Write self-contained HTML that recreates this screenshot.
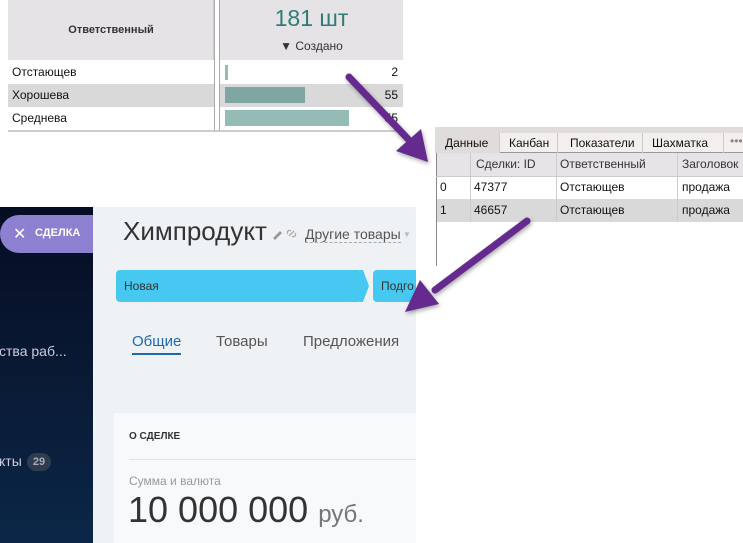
<!DOCTYPE html>
<html><head><meta charset="utf-8"><style>
*{margin:0;padding:0;box-sizing:border-box}
body{width:743px;height:543px;background:#fff;position:relative;overflow:hidden;font-family:"Segoe UI","Liberation Sans","DejaVu Sans",sans-serif}
.a{position:absolute}
.t{font-size:12px;color:#111;white-space:nowrap}
</style></head><body>
<div class="a" style="left:8px;top:0;width:206px;height:60px;background:#e5e3e5;border-right:1px solid #ccc"></div>
<div class="a t" style="left:8px;top:24px;width:206px;text-align:center;font-weight:bold;font-size:11px;color:#333">Ответственный</div>
<div class="a" style="left:214px;top:0;width:6px;height:132px;background:#fff;border-left:1px solid #aaa;border-right:1px solid #aaa"></div>
<div class="a" style="left:220px;top:0;width:183px;height:60px;background:#e5e3e5"></div>
<div class="a" style="left:220px;top:5px;width:183px;text-align:center;font-size:23px;color:#2e7d76">181 шт</div>
<div class="a t" style="left:220px;top:39px;width:183px;text-align:center;color:#333">▼ Создано</div>
<div class="a" style="left:8px;top:84px;width:206px;height:23px;background:#d9d9d9"></div>
<div class="a" style="left:220px;top:84px;width:183px;height:23px;background:#d9d9d9"></div>
<div class="a" style="left:8px;top:130px;width:395px;height:2px;background:#ccc"></div>
<div class="a t" style="left:12px;top:65px">Отстающев</div>
<div class="a t" style="left:12px;top:88px">Хорошева</div>
<div class="a t" style="left:12px;top:111px">Среднева</div>
<div class="a" style="left:225px;top:65px;width:3px;height:15px;background:#94bbb6"></div>
<div class="a" style="left:225px;top:87px;width:80px;height:16px;background:#7fa6a2"></div>
<div class="a" style="left:225px;top:110px;width:124px;height:16px;background:#94bbb6"></div>
<div class="a t" style="left:340px;top:65px;width:58px;text-align:right">2</div>
<div class="a t" style="left:340px;top:88px;width:58px;text-align:right">55</div>
<div class="a t" style="left:340px;top:111px;width:58px;text-align:right">55</div>

<div class="a" style="left:435px;top:127px;width:308px;height:6px;background:#e0dcdc"></div>
<div class="a" style="left:435px;top:133px;width:308px;height:20px;background:#f3efef;border-bottom:1px solid #999"></div>
<div class="a" style="left:435px;top:133px;width:64px;height:20px;background:#e0dcdc"></div>
<div class="a t" style="left:445px;top:136px">Данные</div>
<div class="a" style="left:499px;top:133px;width:1px;height:20px;background:#ccc"></div>
<div class="a t" style="left:509px;top:136px">Канбан</div>
<div class="a" style="left:557px;top:133px;width:1px;height:20px;background:#ccc"></div>
<div class="a t" style="left:570px;top:136px">Показатели</div>
<div class="a" style="left:642px;top:133px;width:1px;height:20px;background:#ccc"></div>
<div class="a t" style="left:652px;top:136px">Шахматка</div>
<div class="a" style="left:723px;top:133px;width:1px;height:20px;background:#ccc"></div>
<div class="a t" style="left:730px;top:134px;color:#888">•••</div>
<div class="a" style="left:436px;top:153px;width:307px;height:23px;background:#e6e4e6"></div>
<div class="a" style="left:436px;top:199px;width:307px;height:23px;background:#d9d9d9"></div>
<div class="a" style="left:436px;top:153px;width:1px;height:113px;background:#888"></div>
<div class="a" style="left:470px;top:153px;width:1px;height:69px;background:#ccc"></div>
<div class="a" style="left:556px;top:153px;width:1px;height:69px;background:#ccc"></div>
<div class="a" style="left:677px;top:153px;width:1px;height:69px;background:#ccc"></div>
<div class="a" style="left:436px;top:176px;width:307px;height:1px;background:#ccc"></div>
<div class="a t" style="left:476px;top:157px;color:#333">Сделки: ID</div>
<div class="a t" style="left:560px;top:157px;color:#333">Ответственный</div>
<div class="a t" style="left:682px;top:157px;color:#333">Заголовок</div>
<div class="a t" style="left:440px;top:180px">0</div>
<div class="a t" style="left:474px;top:180px">47377</div>
<div class="a t" style="left:560px;top:180px">Отстающев</div>
<div class="a t" style="left:682px;top:180px">продажа</div>
<div class="a t" style="left:440px;top:203px">1</div>
<div class="a t" style="left:474px;top:203px">46657</div>
<div class="a t" style="left:560px;top:203px">Отстающев</div>
<div class="a t" style="left:682px;top:203px">продажа</div>

<div class="a" style="left:0;top:207px;width:93px;height:336px;background:linear-gradient(180deg,#050d22,#0a1c38 60%,#0b2748)"></div>
<div class="a" style="left:93px;top:207px;width:323px;height:336px;background:#eef2f5"></div>
<div class="a" style="left:0;top:215px;width:93px;height:38px;background:#8d80d1;border-radius:19px 0 0 19px"></div>
<div class="a" style="left:13px;top:224px;color:#fff;font-size:16px">✕</div>
<div class="a" style="left:35px;top:227px;color:#fff;font-size:11px;font-weight:bold;font-family:'Liberation Sans',sans-serif">СДЕЛКА</div>
<div class="a" style="left:-1px;top:343px;color:#ccd;font-size:14px;font-family:'Liberation Sans',sans-serif">ства раб...</div>
<div class="a" style="left:-1px;top:453px;color:#ccd;font-size:14px;font-family:'Liberation Sans',sans-serif">кты</div>
<div class="a" style="left:27px;top:453px;width:24px;height:18px;border-radius:9px;background:#2f3b4f;color:#aab;font-size:11px;font-weight:bold;text-align:center;line-height:18px;font-family:'Liberation Sans',sans-serif">29</div>
<div class="a" style="left:123px;top:216px;font-size:26px;color:#333;font-family:'Liberation Sans',sans-serif">Химпродукт</div>
<svg class="a" style="left:272px;top:228px" width="28" height="12"><path d="M1 10L8 3L10 5L3 12Z" fill="#999"/><path d="M17 8L22 3M16 6a2 2 0 0 1 3-3M23 5a2 2 0 0 1-3 3" stroke="#aaa" stroke-width="1.3" fill="none"/></svg>
<div class="a" style="left:305px;top:226px;font-size:14px;color:#555;border-bottom:1px dashed #aaa;font-family:'Liberation Sans',sans-serif">Другие товары</div>
<div class="a" style="left:403px;top:230px;font-size:8px;color:#bbb">▼</div>
<div class="a" style="left:116px;top:270px;width:246px;height:32px;background:#47c8f1;border-radius:4px"></div>
<svg class="a" style="left:360px;top:270px" width="10" height="32"><path d="M0 0L3 0L9 16L3 32L0 32Z" fill="#47c8f1"/></svg>
<div class="a" style="left:373px;top:270px;width:43px;height:32px;background:#47c8f1;border-radius:4px 0 0 4px"></div>
<div class="a" style="left:124px;top:279px;font-size:12px;color:#333;font-family:'Liberation Sans',sans-serif">Новая</div>
<div class="a" style="left:381px;top:279px;font-size:12px;color:#333;font-family:'Liberation Sans',sans-serif">Подго</div>
<div class="a" style="left:132px;top:333px;font-size:15px;color:#2067b0">Общие</div>
<div class="a" style="left:132px;top:353px;width:49px;height:2px;background:#2067b0"></div>
<div class="a" style="left:216px;top:333px;font-size:15px;color:#555">Товары</div>
<div class="a" style="left:303px;top:333px;font-size:15px;color:#555">Предложения</div>
<div class="a" style="left:114px;top:413px;width:302px;height:130px;background:#f8f9fb"></div>
<div class="a" style="left:129px;top:431px;font-size:10px;font-weight:bold;color:#333;font-family:'Liberation Sans',sans-serif">О СДЕЛКЕ</div>
<div class="a" style="left:129px;top:459px;width:287px;height:1px;background:#e0e3e6"></div>
<div class="a" style="left:129px;top:474px;font-size:12px;color:#999;font-family:'Liberation Sans',sans-serif">Сумма и валюта</div>
<div class="a" style="left:128px;top:489px;font-size:36px;color:#333;font-family:'Liberation Sans',sans-serif">10 000 000 <span style="font-size:24px;color:#777">руб.</span></div>

<svg class="a" style="left:0;top:0;filter:drop-shadow(1px 2px 2px rgba(0,0,0,.35))" width="743" height="543">
<line x1="349" y1="77" x2="408" y2="139" stroke="#652a8e" stroke-width="7" stroke-linecap="round"/>
<path d="M428 162L396 151L421 129Z" fill="#652a8e"/>
<line x1="527" y1="221" x2="435" y2="290" stroke="#652a8e" stroke-width="7" stroke-linecap="round"/>
<path d="M405 312L420 280L439 304Z" fill="#652a8e"/>
</svg>
</body></html>
